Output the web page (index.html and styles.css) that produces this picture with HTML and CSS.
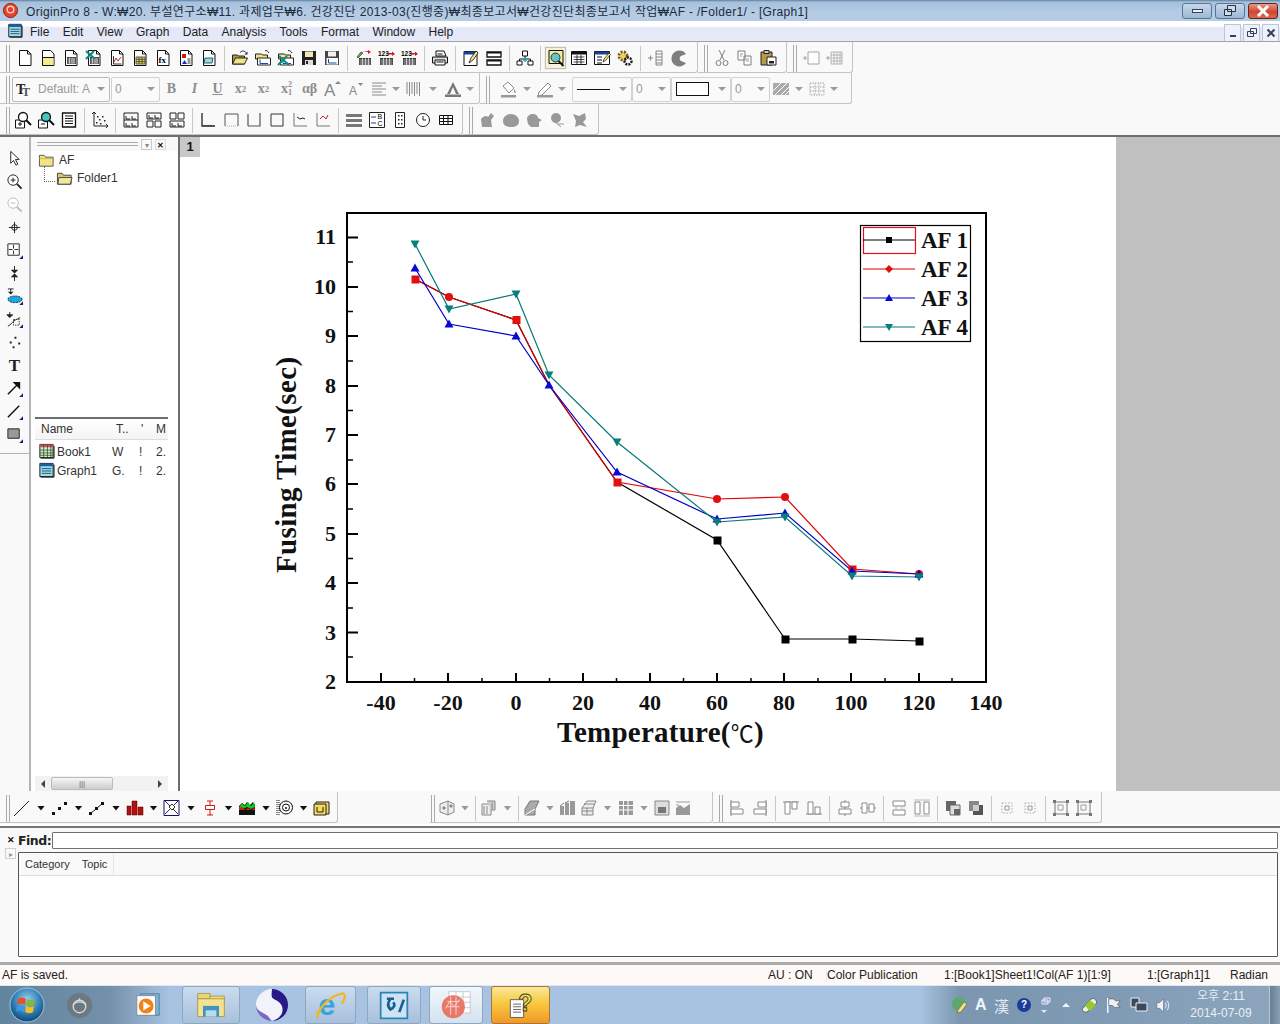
FILE: index.html
```html
<!DOCTYPE html>
<html lang="ko">
<head>
<meta charset="utf-8">
<title>OriginPro 8</title>
<link rel="stylesheet" href="styles.css">
</head>
<body>
<svg class="defs" width="0" height="0">
<defs>
<symbol id="doc" viewBox="0 0 18 18"><path d="M3.5 1.5h8l3.500 3.500v11.500h-11.500z" fill="#fff" stroke="#111"/><path d="M11.500 1.500v3.500h3.500" fill="none" stroke="#111"/></symbol>
<symbol id="proj" viewBox="0 0 18 18"><path d="M3.500 1.500h8l3.500 3.500v11.500h-11.500z" fill="#fff" stroke="#111"/><path d="M4 9h10.500v7h-10.500z" fill="#f6ea8c"/><path d="M3.500 8.500h11.500" stroke="#111"/></symbol>
<symbol id="wks" viewBox="0 0 18 18"><use href="#doc"/><path d="M5 8h9v7h-9z" fill="#333"/><path d="M5.500 10h8M5.500 12h8M5.500 14h8M7.500 8.500v6M10 8.500v6M12 8.500v6" stroke="#eee" stroke-width=".7"/></symbol>
<symbol id="xl" viewBox="0 0 18 18"><use href="#wks"/><path d="M1 2l9 8M9 2l-8 8" stroke="#0f8a80" stroke-width="2.200"/></symbol>
<symbol id="gr" viewBox="0 0 18 18"><use href="#doc"/><path d="M5.500 7v8h8" fill="none" stroke="#333"/><path d="M6 13l2-4 2 3 3-4" fill="none" stroke="#d02020"/></symbol>
<symbol id="mat" viewBox="0 0 18 18"><use href="#doc"/><path d="M5 8h9v7h-9z" fill="#e8d85c"/><path d="M5 8h9v7h-9zM5 10.300h9M5 12.600h9M8 8v7M11 8v7" fill="none" stroke="#333" stroke-width=".8"/></symbol>
<symbol id="fx" viewBox="0 0 18 18"><use href="#doc"/><text x="4.600" y="14" font-family="Liberation Serif" font-weight="700" font-size="9">fx</text></symbol>
<symbol id="lay" viewBox="0 0 18 18"><use href="#doc"/><path d="M5 5h4v4h-4z" fill="#d01818"/><path d="M5 15l2.500-4 2.500 4z" fill="#1030c0"/><path d="M10.500 10h3M10.500 12h3M10.500 14h3" stroke="#333"/></symbol>
<symbol id="note" viewBox="0 0 18 18"><use href="#doc"/><path d="M5 9h8l-1 5h-8z" fill="#9cd8d8" stroke="#155" stroke-width=".9"/></symbol>
<symbol id="open" viewBox="0 0 18 18"><path d="M1.500 6h5l1 1h6v8h-12z" fill="#ad9b3c" stroke="#222"/><path d="M1.500 15l3-6h12l-3 6z" fill="#f3e388" stroke="#222"/><path d="M9 3.500c2-2 4-2 6 0" fill="none" stroke="#222"/><path d="M16.500 2.500v3h-3z" fill="#222"/></symbol>
<symbol id="opent" viewBox="0 0 18 18"><path d="M1.500 5h6l1 1h5v4h-12z" fill="#f3e388" stroke="#222"/><path d="M3.500 9h13v7h-13z" fill="#fff" stroke="#222"/><path d="M6 10.500v4h8" fill="none" stroke="#124aa0"/><path d="M11 1.500c2 0 3 1 4 2.500" fill="none" stroke="#222"/></symbol>
<symbol id="openx" viewBox="0 0 18 18"><use href="#opent"/><path d="M2 7l10 9M10 7l-9 9" stroke="#0f8a80" stroke-width="2"/></symbol>
<symbol id="save" viewBox="0 0 18 18"><path d="M2 2h14v14h-14z" fill="#222"/><path d="M5 2.500h8v5.500h-8z" fill="#f1e8b0"/><path d="M5 11h8v5h-8z" fill="#ddd"/><path d="M6 12h2v3h-2z" fill="#222"/></symbol>
<symbol id="savet" viewBox="0 0 18 18"><path d="M2 2h14v14h-14z" fill="#444"/><path d="M5 2.500h8v5h-8z" fill="#f1f1f1"/><path d="M3.500 9h11.500v6.500h-11.500z" fill="#fff"/><path d="M5.500 10v4h8" fill="none" stroke="#124aa0"/></symbol>
<symbol id="imp1" viewBox="0 0 18 18"><path d="M5 9h12v7h-12z" fill="#333"/><path d="M5.500 11h11M5.500 13h11M5.500 15h11M8.500 9v7M11.500 9v7M14.500 9v7" stroke="#eee" stroke-width=".7"/><path d="M3 8l4-5 2 1-5 5z" fill="#6ca848" stroke="#222" stroke-width=".6"/><path d="M9 3h5v2l3-2-3-2v1" fill="#d01818"/></symbol>
<symbol id="imp2" viewBox="0 0 18 18"><path d="M3 9h13v7h-13z" fill="#333"/><path d="M3.500 11h12M3.500 13h12M3.500 15h12M6.500 9v7M9.500 9v7M12.500 9v7" stroke="#eee" stroke-width=".7"/><text x="1" y="7" font-family="Liberation Sans" font-weight="700" font-size="6.500">123</text><path d="M11 4h4v-1.500l3 2.500-3 2v-1.500h-4z" fill="#d01818"/></symbol>
<symbol id="print" viewBox="0 0 18 18"><path d="M5 2h8l2 5h-10z" fill="#fff" stroke="#111"/><path d="M1.500 8h15v6h-15z" fill="#ddd" stroke="#111"/><path d="M4 11h10v5h-10z" fill="#fff" stroke="#111"/><path d="M6.500 5h5M5.500 13h7" stroke="#111"/></symbol>
<symbol id="pen" viewBox="0 0 18 18"><path d="M2 2.500h13v14h-13z" fill="#fff" stroke="#111"/><path d="M2 2.500h13v3h-13z" fill="#1a3f94"/><path d="M7 14l2-5 5-7 2 2-5 7z" fill="#fbe880" stroke="#111" stroke-width=".8"/></symbol>
<symbol id="split" viewBox="0 0 18 18"><path d="M2 3h14v5h-14zM2 11h14v5h-14z" fill="#fff" stroke="#111" stroke-width="1.300"/><path d="M2 3h14v1.500h-14zM2 11h14v1.500h-14z" fill="#111"/></symbol>
<symbol id="tree" viewBox="0 0 18 18"><path d="M9 7v3M3.500 12v-2h11v2" fill="none" stroke="#111"/><path d="M6.500 2h5v5h-5zM1 12h5v4h-5zM12 12h5v4h-5z" fill="#fff" stroke="#111"/><path d="M9 8l3 2.500-3 2.500-3-2.500z" fill="#39a0a8"/></symbol>
<symbol id="find" viewBox="0 0 18 18"><path d="M2 1.500h14v13h-14z" fill="#f6ec9c" stroke="#111"/><circle cx="8.500" cy="8.500" r="4.500" fill="#5fc4cc" stroke="#333"/><path d="M11.500 12l5 5" stroke="#111" stroke-width="2"/></symbol>
<symbol id="tab" viewBox="0 0 18 18"><path d="M1.500 2.500h15v13h-15z" fill="#fff" stroke="#111"/><path d="M1.500 2.500h15v3h-15z" fill="#111"/><path d="M3.500 8h11M3.500 10.500h11M3.500 13h11M7 6v9M11 6v9" stroke="#111" stroke-width=".8"/></symbol>
<symbol id="tabp" viewBox="0 0 18 18"><path d="M1.500 2.500h15v13h-15z" fill="#fff" stroke="#111"/><path d="M1.500 2.500h15v3h-15z" fill="#1a3f94"/><path d="M4 8h5M4 11h5M4 14h5" stroke="#111"/><path d="M10 13l1-3 5-6 1.500 1.500-5 6z" fill="#fbe880" stroke="#111" stroke-width=".7"/></symbol>
<symbol id="gear" viewBox="0 0 18 18"><circle cx="7" cy="7" r="4" fill="none" stroke="#7a5c10" stroke-width="3" stroke-dasharray="2 1.200"/><circle cx="12" cy="12" r="3.500" fill="none" stroke="#222" stroke-width="2.500" stroke-dasharray="2 1"/><circle cx="7" cy="7" r="2.500" fill="#f0cf50"/></symbol>
<symbol id="addc" viewBox="0 0 18 18"><path d="M9 2h6v14h-6zM9 5h6M9 8h6M9 11h6M9 14h6M1 9h5M3.500 6.500v5" fill="none" stroke="#555" stroke-width=".9"/></symbol>
<symbol id="pie" viewBox="0 0 18 18"><path d="M16 5a8 8 0 1 0 0 9l-5-2a3 3 0 0 1 0-5z" fill="#555"/></symbol>
<symbol id="cut" viewBox="0 0 18 18"><path d="M6 1l5 10M12 1l-5 10" stroke="#555"/><circle cx="5.500" cy="14" r="2.500" fill="none" stroke="#555"/><circle cx="12.500" cy="14" r="2.500" fill="none" stroke="#555"/></symbol>
<symbol id="copy" viewBox="0 0 18 18"><path d="M2 2h7v9h-7zM8 7h7v9h-7z" fill="#fff" stroke="#555"/><path d="M4 5h3M4 7h2M10 10h3M10 12h3" stroke="#555" stroke-width=".8"/></symbol>
<symbol id="paste" viewBox="0 0 18 18"><path d="M2 3h11v13h-11z" fill="#b29a4a" stroke="#222"/><path d="M5 1.500h5v3h-5z" fill="#ccc" stroke="#222"/><path d="M8 8h9v8h-9z" fill="#fff" stroke="#222"/><path d="M10 12h5v2.500h-5z" fill="#222"/></symbol>
<symbol id="addr" viewBox="0 0 18 18"><path d="M6 3h11v12h-11z" fill="#fff" stroke="#888"/><path d="M1 9h4M3 7v4" stroke="#888"/></symbol>
<symbol id="addg" viewBox="0 0 18 18"><path d="M6 3h11v12h-11zM6 6h11M6 9h11M6 12h11M9 3v12M12 3v12M15 3v12" fill="#fff" stroke="#888" stroke-width=".8"/><path d="M1 9h4M3 7v4" stroke="#888"/></symbol>
<symbol id="fonts" viewBox="0 0 18 18"><text x="0" y="14" font-family="Liberation Serif" font-weight="700" font-size="14" fill="#222">T</text><text x="6" y="16" font-family="Liberation Serif" font-weight="700" font-size="12" fill="#555">T</text></symbol>
<symbol id="ainc" viewBox="0 0 18 18"><text x="0" y="16" font-family="Liberation Sans" font-size="17" fill="#888">A</text><path d="M14 1l3 3h-6z" fill="#888"/></symbol>
<symbol id="adec" viewBox="0 0 18 18"><text x="2" y="15" font-family="Liberation Sans" font-size="12" fill="#888">A</text><path d="M11 3h5l-2.500 3z" fill="#888"/></symbol>
<symbol id="align" viewBox="0 0 18 18"><path d="M2 3h14M2 6h10M2 9h14M2 12h10M2 15h14" stroke="#888"/></symbol>
<symbol id="bars" viewBox="0 0 18 18"><path d="M2 2v12M4.500 2v14M7 2v12M9.500 2v14M12 2v12M14.500 2v14" stroke="#888"/></symbol>
<symbol id="acol" viewBox="0 0 18 18"><path d="M3 14l6-12 6 12h-3l-3-7-3 7z" fill="#777"/><path d="M1 14.500h16v2.500h-16z" fill="#777"/></symbol>
<symbol id="fill" viewBox="0 0 18 18"><path d="M3 6l5-4 6 6-5 5z" fill="#fff" stroke="#888"/><path d="M14 9c2 2 2 4 1 4s-1-2-1-4z" fill="#888"/><path d="M1 15h15v2.500h-15z" fill="#999"/></symbol>
<symbol id="lpen" viewBox="0 0 18 18"><path d="M3 12l9-9 3 3-9 9-4 1z" fill="#fff" stroke="#888"/><path d="M1 15h16v2.500h-16z" fill="#999"/></symbol>
<symbol id="patt" viewBox="0 0 18 18"><path d="M1 3h16v12h-16z" fill="#aaa"/><path d="M1 11l8-8M3 15l12-12M9 15l8-8M13 15l4-4" stroke="#fff"/></symbol>
<symbol id="gridb" viewBox="0 0 18 18"><path d="M2 3h14v12h-14zM2 7h14M2 11h14M7 3v12M11 3v12" fill="none" stroke="#aaa" stroke-dasharray="1.500 1"/></symbol>
<symbol id="zin" viewBox="0 0 18 18"><path d="M1.500 9h9v8h-9zM4 13h4M6 11v4" fill="#fff" stroke="#111"/><circle cx="9" cy="6" r="4.500" fill="#fff" stroke="#111" stroke-width="1.300"/><path d="M12 9l5 5" stroke="#111" stroke-width="2"/></symbol>
<symbol id="zout" viewBox="0 0 18 18"><path d="M1.500 9h9v8h-9zM4 13h4" fill="#fff" stroke="#111"/><circle cx="9" cy="6" r="4.500" fill="#41c6c6" stroke="#111" stroke-width="1.300"/><path d="M12 9l5 5" stroke="#111" stroke-width="2"/></symbol>
<symbol id="lst" viewBox="0 0 18 18"><path d="M2.500 2h13v14h-13z" fill="#fff" stroke="#111" stroke-width="1.300"/><path d="M5 5h8M5 7.500h8M5 10h8M5 12.500h8" stroke="#111"/></symbol>
<symbol id="scat" viewBox="0 0 18 18"><path d="M3 1v14h14M1 3l2-2 2 2M15 13l2 2-2 2" fill="none" stroke="#222"/><path d="M5 11h1.500v1.500h-1.500zM8 8h1.500v1.500h-1.500zM11 5h1.500v1.500h-1.500zM13 9h1.500v1.500h-1.500zM9 12h1.500v1.500h-1.500zM6 5h1.500v1.500h-1.500z" fill="#222"/></symbol>
<symbol id="l1" viewBox="0 0 18 18"><path d="M2 2h14v14h-14zM2 9h14M4 5v3M4 8h4M10 5v3M10 8h4M4 12v3M4 15h4M10 12v3M10 15h4" fill="none" stroke="#222"/></symbol>
<symbol id="l2" viewBox="0 0 18 18"><path d="M2 2h14v6h-14zM2 10h6v6h-6zM10 10h6v6h-6zM4 4v3h4M10 4v3h4" fill="none" stroke="#222"/></symbol>
<symbol id="l3" viewBox="0 0 18 18"><path d="M2 2h6v6h-6zM10 2h6v6h-6zM2 10h14v6h-14zM4 12v3h4M10 12v3h4" fill="none" stroke="#222"/></symbol>
<symbol id="ax1" viewBox="0 0 18 18"><path d="M3 2v13h13" fill="none" stroke="#222" stroke-width="1.300"/><path d="M6 14v1M9 14v1M12 14v1" stroke="#222"/></symbol>
<symbol id="ax2" viewBox="0 0 18 18"><path d="M3 15v-12h13v12" fill="none" stroke="#555"/><path d="M3 15h13" stroke="#aaa" stroke-dasharray="1 1"/></symbol>
<symbol id="ax3" viewBox="0 0 18 18"><path d="M3 15v-12M15 2v13h-12" fill="none" stroke="#555" stroke-width="1.200"/></symbol>
<symbol id="ax4" viewBox="0 0 18 18"><path d="M3 3h12v12h-12z" fill="none" stroke="#333"/></symbol>
<symbol id="ax5" viewBox="0 0 18 18"><path d="M3 2v13h13" fill="none" stroke="#777"/><path d="M6 6l3 2 3-1 2 1" fill="none" stroke="#222"/></symbol>
<symbol id="ax6" viewBox="0 0 18 18"><path d="M3 2v13h13" fill="none" stroke="#777"/><path d="M6 8l3-3 3 3 2-4" fill="none" stroke="#c02020"/></symbol>
<symbol id="rows" viewBox="0 0 18 18"><path d="M1 3h16v3h-16zM1 8h16v3h-16zM1 13h16v3h-16z" fill="#777"/></symbol>
<symbol id="abc" viewBox="0 0 18 18"><path d="M1.500 1.500h15v15h-15z" fill="#fff" stroke="#222"/><path d="M3 6h5M3 12h5" stroke="#1a3f94"/><text x="9.500" y="8" font-family="Liberation Sans" font-size="7">B</text><text x="9.500" y="15" font-family="Liberation Sans" font-size="7">C</text></symbol>
<symbol id="dots" viewBox="0 0 18 18"><path d="M4.500 1.500h9v15h-9z" fill="#fff" stroke="#222"/><path d="M7 4h1.500v1.500h-1.500zM10 8h1.500v1.500h-1.500zM7 8h1.500v1.500h-1.500zM10 12h1.500v1.500h-1.500zM7 12h1.500v1.500h-1.500zM10 4h1.500v1.500h-1.500z" fill="#222"/></symbol>
<symbol id="clock" viewBox="0 0 18 18"><circle cx="9" cy="9" r="6.500" fill="#fff" stroke="#222"/><path d="M9 5v4h3" fill="none" stroke="#222"/></symbol>
<symbol id="tbl" viewBox="0 0 18 18"><path d="M2.500 4.500h13v9h-13zM2.500 7.500h13M2.500 10.500h13M6.500 4.500v9M11 4.500v9" fill="#fff" stroke="#111"/></symbol>
<symbol id="g1" viewBox="0 0 18 18"><path d="M2 8c2-3 6-4 7-2l3-4 3 3-3 4 1 7h-10z" fill="#999"/></symbol>
<symbol id="g2" viewBox="0 0 18 18"><path d="M1 10c0-5 5-7 8-7 4 0 8 3 8 7s-3 6-8 6-8-2-8-6z" fill="#999"/></symbol>
<symbol id="g3" viewBox="0 0 18 18"><path d="M2 8c0-3 3-5 6-5s5 2 5 4l4 2-3 2v5h-8l-3-3z" fill="#999"/></symbol>
<symbol id="g4" viewBox="0 0 18 18"><path d="M3 7a5 5 0 0 1 10 0c0 3-3 5-5 5s-5-2-5-5z" fill="#999"/><path d="M8 12l5 4M10 13h6" stroke="#999"/></symbol>
<symbol id="g5" viewBox="0 0 18 18"><path d="M2 3l6 2 6-3 1 6-3 3 4 5-7-2-5 2 1-6z" fill="#999"/></symbol>
<symbol id="t-sel" viewBox="0 0 18 18"><path d="M5 1.500v12.500l3-3 2.500 5 2-1-2.500-5h4z" fill="#fff" stroke="#222"/></symbol>
<symbol id="t-zi" viewBox="0 0 18 18"><circle cx="7.500" cy="7.500" r="5.500" fill="#fff" stroke="#222"/><path d="M5 7.500h5M7.500 5v5" stroke="#222"/><path d="M11.500 11.500l5 5" stroke="#222" stroke-width="2"/></symbol>
<symbol id="t-zo" viewBox="0 0 18 18"><circle cx="7.500" cy="7.500" r="5.500" fill="#fff" stroke="#bbb"/><path d="M5 7.500h5" stroke="#bbb"/><path d="M11.500 11.500l5 5" stroke="#bbb" stroke-width="2"/></symbol>
<symbol id="t-cr" viewBox="0 0 18 18"><circle cx="9" cy="9" r="3" fill="none" stroke="#222"/><path d="M9 3v12M3 9h12" stroke="#222"/></symbol>
<symbol id="t-rs" viewBox="0 0 18 18"><path d="M2 2h12v12h-12z" fill="#fff" stroke="#222"/><path d="M8 3v4M8 9v4M3 8h4M9 8h4" stroke="#222"/><path d="M18 14v4h-4z" fill="#1c1c80"/></symbol>
<symbol id="t-pk" viewBox="0 0 18 18"><path d="M9 1v6M9 11v6" stroke="#222"/><path d="M5 5h8l-4 4zM9 9l4 4h-8z" fill="#222"/></symbol>
<symbol id="t-ds" viewBox="0 0 18 18"><ellipse cx="9.500" cy="12" rx="7.500" ry="3.500" fill="#18a8e8" stroke="#222" stroke-dasharray="2 1"/><path d="M2 1h6M5 1v3" stroke="#222"/><path d="M2 4h6l-3 3z" fill="#222"/><path d="M18 14v4h-4z" fill="#1c1c80"/></symbol>
<symbol id="t-dr" viewBox="0 0 18 18"><path d="M4 1v3M1 4h6l-3 3zM2 16c3-1 5-6 13-9" fill="none" stroke="#222"/><path d="M1 4h6l-3 3z" fill="#222"/><path d="M8 9h6v6h-6z" fill="none" stroke="#333" stroke-dasharray="1.500 1"/><path d="M18 14v4h-4z" fill="#1c1c80"/></symbol>
<symbol id="t-dt" viewBox="0 0 18 18"><path d="M9 3h2v2h-2zM4 8h2v2h-2zM13 9h2v2h-2zM7 13h2v2h-2z" fill="#222"/></symbol>
<symbol id="t-ar" viewBox="0 0 18 18"><path d="M2 15l11-11" stroke="#111" stroke-width="1.500"/><path d="M7 2h8v8z" fill="#111"/><path d="M18 14v4h-4z" fill="#1c1c80"/></symbol>
<symbol id="t-ln" viewBox="0 0 18 18"><path d="M2 15l12-12" stroke="#111" stroke-width="1.500"/><path d="M18 14v4h-4z" fill="#1c1c80"/></symbol>
<symbol id="t-rc" viewBox="0 0 18 18"><path d="M2 3h12v10h-12z" fill="#999" stroke="#222"/><path d="M18 14v4h-4z" fill="#1c1c80"/></symbol>
<symbol id="b-ln" viewBox="0 0 18 18"><path d="M1 17l15-15" stroke="#222"/></symbol>
<symbol id="b-sc" viewBox="0 0 18 18"><path d="M1 13h3v3h-3zM7 8h3v3h-3zM13 3h3v3h-3z" fill="#111"/></symbol>
<symbol id="b-ls" viewBox="0 0 18 18"><path d="M2 15l13-11" stroke="#111"/><path d="M1 13h3v3h-3zM7 8h3v3h-3zM13 3h3v3h-3z" fill="#111"/></symbol>
<symbol id="b-bar" viewBox="0 0 18 18"><path d="M1 7h4v9h-4zM6 2h5v14h-5zM12 8h5v8h-5z" fill="#b81010" stroke="#400" stroke-width=".5"/></symbol>
<symbol id="b-3d" viewBox="0 0 18 18"><path d="M1 1.500h15v15h-15z" fill="#fff" stroke="#101070"/><path d="M2 2l13 13M15 2l-13 13" stroke="#333"/><path d="M6 8l3-3 3 3-3 3z" fill="#fff" stroke="#333"/></symbol>
<symbol id="b-err" viewBox="0 0 18 18"><path d="M6 2h6M9 2v14M6 16h6" stroke="#d01818"/><path d="M4.500 6.500h9v4h-9z" fill="#fff" stroke="#d01818"/></symbol>
<symbol id="b-sf" viewBox="0 0 18 18"><path d="M1 7l3-3 3 2 2-3 3 3 3-3 2 3v10h-16z" fill="#111"/><path d="M1 9l3-5 3 3 3-4 3 4 3-4 1 5-4 2-4-2-4 2z" fill="#13c422"/><path d="M1 9l3-1 3 3 3-2 3 2 3-2 1 1v1h-16z" fill="#d81818"/></symbol>
<symbol id="b-sp" viewBox="0 0 18 18"><path d="M1 1v15M3 1v15" stroke="#111" stroke-dasharray="1 1"/><circle cx="10" cy="8.500" r="6.500" fill="none" stroke="#111"/><circle cx="10" cy="8.500" r="3.500" fill="none" stroke="#111"/><circle cx="10" cy="9" r="1" fill="#111"/></symbol>
<symbol id="b-tm" viewBox="0 0 18 18"><path d="M3 3h13v12h-13z" fill="#f4d860" stroke="#222"/><path d="M1 5h12v11h-12z" fill="#f4d860" stroke="#222"/><path d="M4 8v5h6v-5" fill="none" stroke="#222"/></symbol>
<symbol id="m1" viewBox="0 0 18 18"><path d="M2 5l8-3 6 3v8l-6 3-8-3z" fill="#eee" stroke="#888"/><path d="M10 2v14M5 8h2v2h-2zM12 6h2v2h-2z" stroke="#888" fill="#888"/></symbol>
<symbol id="m2" viewBox="0 0 18 18"><path d="M2 5h9v11h-9z" fill="#eee" stroke="#888"/><path d="M7 2h8v9h-4" fill="#ccc" stroke="#888"/><path d="M4 7v8M7 7v8M12 4v6" stroke="#888"/></symbol>
<symbol id="m3" viewBox="0 0 18 18"><path d="M2 10l5-8h9l-4 8v6h-10z" fill="#aaa" stroke="#777"/><path d="M2 16l10-6" stroke="#fff"/></symbol>
<symbol id="m4" viewBox="0 0 18 18"><path d="M1 7h4v9h-4zM6 4h4v12h-4zM11 2h5v14h-5z" fill="#999"/><path d="M1 7l4-3M6 4l4-2" stroke="#777"/></symbol>
<symbol id="m5" viewBox="0 0 18 18"><path d="M2 9l5-7h9l-3 7v7h-11z" fill="#eee" stroke="#888"/><path d="M2 9h11M2 12h11M7 9v7M4 5h10" stroke="#888"/></symbol>
<symbol id="m6" viewBox="0 0 18 18"><path d="M2 2h14v14h-14z" fill="#999"/><path d="M2 6.500h14M2 11h14M6.500 2v14M11 2v14" stroke="#fff"/></symbol>
<symbol id="m7" viewBox="0 0 18 18"><path d="M2 2h14v14h-14z" fill="#ddd" stroke="#888"/><path d="M5 8h8v6h-8z" fill="#777"/></symbol>
<symbol id="m8" viewBox="0 0 18 18"><path d="M2 9l4-3 4 3 6-4v11h-14z" fill="#999"/><path d="M2 3h14M2 6h3" stroke="#999"/></symbol>
<symbol id="a1" viewBox="0 0 18 18"><path d="M3 1v16" stroke="#888"/><path d="M3 3h8v5h-8zM3 10h12v5h-12z" fill="#fff" stroke="#888"/></symbol>
<symbol id="a2" viewBox="0 0 18 18"><path d="M15 1v16" stroke="#888"/><path d="M7 3h8v5h-8zM3 10h12v5h-12z" fill="#fff" stroke="#888"/></symbol>
<symbol id="a3" viewBox="0 0 18 18"><path d="M1 3h16" stroke="#888"/><path d="M3 3h5v12h-5zM10 3h5v7h-5z" fill="#fff" stroke="#888"/></symbol>
<symbol id="a4" viewBox="0 0 18 18"><path d="M1 15h16" stroke="#888"/><path d="M3 3h5v12h-5zM10 8h5v7h-5z" fill="#fff" stroke="#888"/></symbol>
<symbol id="a5" viewBox="0 0 18 18"><path d="M9 1v16" stroke="#888"/><path d="M5 3h8v5h-8zM3 10h12v5h-12z" fill="#fff" stroke="#888"/></symbol>
<symbol id="a6" viewBox="0 0 18 18"><path d="M1 9h16" stroke="#888"/><path d="M3 4h5v10h-5zM10 5h5v8h-5z" fill="#fff" stroke="#888"/></symbol>
<symbol id="a7" viewBox="0 0 18 18"><path d="M3 2h12v5h-12zM3 11h12v5h-12z" fill="#fff" stroke="#888"/><path d="M6 7v4M12 7v4" stroke="#bbb"/></symbol>
<symbol id="a8" viewBox="0 0 18 18"><path d="M2 3h5v12h-5zM11 3h5v12h-5z" fill="#fff" stroke="#888"/><path d="M1 1h16M1 17h16" stroke="#bbb"/></symbol>
<symbol id="f1" viewBox="0 0 18 18"><path d="M2 2h10v10h-10z" fill="#666"/><path d="M6 6h10v10h-10z" fill="#ddd" stroke="#666"/><path d="M10 10h6v6h-6z" fill="#666"/></symbol>
<symbol id="f2" viewBox="0 0 18 18"><path d="M2 2h10v10h-10z" fill="#888"/><path d="M6 6h10v10h-10z" fill="#555"/><path d="M6 6h6v6h-6z" fill="#ccc"/></symbol>
<symbol id="u1" viewBox="0 0 18 18"><path d="M4 4h10v10h-10z" fill="none" stroke="#aaa" stroke-dasharray="1.500 1.500"/><path d="M7 7h4v4h-4z" fill="none" stroke="#999"/></symbol>
<symbol id="r1" viewBox="0 0 18 18"><path d="M3 3h12v12h-12z" fill="none" stroke="#777"/><path d="M1 1h3v3h-3zM14 1h3v3h-3zM1 14h3v3h-3zM14 14h3v3h-3z" fill="#777"/><path d="M6 6h5v5h-5z" fill="none" stroke="#999"/></symbol>
<symbol id="fold" viewBox="0 0 18 18"><path d="M1.500 3.500h5l1.500 2h8v9.500h-14.500z" fill="#f2e384" stroke="#555"/><path d="M1.500 7h14.500" stroke="#c9b84c"/></symbol>
<symbol id="fold2" viewBox="0 0 18 18"><path d="M1.500 3.500h5l1.500 2h8v9.500h-14.500z" fill="#d8c76a" stroke="#444"/><path d="M3 8h14l-2 7h-13z" fill="#f4e79c" stroke="#444"/></symbol>
<symbol id="book" viewBox="0 0 18 18"><path d="M2 1.500h14v14h-14z" fill="#d9f0d0" stroke="#111"/><path d="M2 1.500h14v3h-14z" fill="#d24a6a"/><path d="M2 7.500h14M2 10.500h14M2 13h14M6 2v13M10 2v13M13.500 2v13" stroke="#245024" stroke-width=".8"/><path d="M17 3v13h-14" fill="none" stroke="#111"/></symbol>
<symbol id="grph" viewBox="0 0 18 18"><path d="M2 1.500h14v14h-14z" fill="#9ce0e0" stroke="#111"/><path d="M2 1.500h14v3h-14z" fill="#1a60a0"/><path d="M4 7h10M4 9.500h10M4 12h10" stroke="#1c4a8c"/><path d="M17 3v13h-14" fill="none" stroke="#111"/></symbol>
</defs>
</svg>

<div class="app">
  <header class="title">
    <svg class="appicon" viewBox="0 0 18 18"><circle cx="9" cy="9" r="7.500" fill="#e2442e" stroke="#8a2018"/><circle cx="9" cy="8" r="3.500" fill="none" stroke="#f9d0c0" stroke-width="1.500"/></svg>
    <span class="titletext">OriginPro 8 - W:₩20. 부설연구소₩11. 과제업무₩6. 건강진단 2013-03(진행중)₩최종보고서₩건강진단최종보고서 작업₩AF - /Folder1/ - [Graph1]</span>
    <div class="caps">
      <span class="cap"><i class="capmin"></i></span>
      <span class="cap"><svg width="14" height="13" viewBox="0 0 14 13"><path d="M4.500 1.500h8v6h-8zM1.500 5.500h7v6h-7z" fill="#cfdcec" stroke="#234"/></svg></span>
      <span class="cap capx"><svg width="14" height="12" viewBox="0 0 14 12"><path d="M2 1l10 10M12 1l-10 10" stroke="#fff" stroke-width="3"/></svg></span>
    </div>
  </header>

  <nav class="menu">
    <svg class="docicon" viewBox="0 0 18 18"><use href="#grph"/></svg>
    <span>File</span><span>Edit</span><span>View</span><span>Graph</span><span>Data</span><span>Analysis</span><span>Tools</span><span>Format</span><span>Window</span><span>Help</span>
    <div class="mdicaps">
      <span class="mcap"><svg width="10" height="10" viewBox="0 0 10 10"><path d="M2 8h6" stroke="#345" stroke-width="2"/></svg></span>
      <span class="mcap"><svg width="10" height="10" viewBox="0 0 10 10"><path d="M3.500 .5h6v5h-6zM.5 3.500h6v5h-6z" fill="#eef" stroke="#345"/></svg></span>
      <span class="mcap"><svg width="10" height="10" viewBox="0 0 10 10"><path d="M1.500 1.500l7 7M8.500 1.500l-7 7" stroke="#345" stroke-width="2"/></svg></span>
    </div>
  </nav>

  <section class="toolbars">
    <div class="row">
      <div class="tb"><i class="grip g13"></i>
        <b class="i"><svg><use href="#doc"/></svg></b><b class="i"><svg><use href="#proj"/></svg></b><b class="i"><svg><use href="#wks"/></svg></b><b class="i"><svg><use href="#xl"/></svg></b><b class="i"><svg><use href="#gr"/></svg></b><b class="i"><svg><use href="#mat"/></svg></b><b class="i"><svg><use href="#fx"/></svg></b><b class="i"><svg><use href="#lay"/></svg></b><b class="i"><svg><use href="#note"/></svg></b>
        <i class="sep"></i>
        <b class="i"><svg><use href="#open"/></svg></b><b class="i"><svg><use href="#opent"/></svg></b><b class="i"><svg><use href="#openx"/></svg></b><b class="i"><svg><use href="#save"/></svg></b><b class="i"><svg><use href="#savet"/></svg></b>
        <i class="sep"></i>
        <b class="i"><svg><use href="#imp1"/></svg></b><b class="i"><svg><use href="#imp2"/></svg></b><b class="i"><svg><use href="#imp2"/></svg></b>
        <i class="sep"></i>
        <b class="i"><svg><use href="#print"/></svg></b>
        <i class="sep"></i>
        <b class="i"><svg><use href="#pen"/></svg></b><b class="i"><svg><use href="#split"/></svg></b>
        <i class="sep"></i>
        <b class="i"><svg><use href="#tree"/></svg></b>
        <i class="sep"></i>
        <b class="i on"><svg><use href="#find"/></svg></b><b class="i"><svg><use href="#tab"/></svg></b><b class="i"><svg><use href="#tabp"/></svg></b><b class="i"><svg><use href="#gear"/></svg></b>
        <i class="sep"></i>
        <b class="i off"><svg><use href="#addc"/></svg></b><b class="i off"><svg><use href="#pie"/></svg></b>
      </div>
      <div class="tb"><i class="grip g12"></i>
        <b class="i off"><svg><use href="#cut"/></svg></b><b class="i off"><svg><use href="#copy"/></svg></b><b class="i"><svg><use href="#paste"/></svg></b>
      </div>
      <div class="tb"><i class="grip g12"></i>
        <b class="i off"><svg><use href="#addr"/></svg></b><b class="i off"><svg><use href="#addg"/></svg></b>
      </div>
    </div>

    <div class="row">
      <div class="tb tbf"><i class="grip g12"></i>
        <span class="combo fontc"><svg class="ic" viewBox="0 0 18 18"><use href="#fonts"/></svg><span class="ctext">Default: A</span><em class="arr"></em></span>
        <span class="combo sizec"><span class="ctext">0</span><em class="arr"></em></span>
        <b class="i t tb1">B</b><b class="i t it">I</b><b class="i t ul">U</b><b class="i t">x<sup>2</sup></b><b class="i t">x<sub>2</sub></b><b class="i t">x<span class="stack">2<br>1</span></b><b class="i t">αβ</b>
        <b class="i"><svg><use href="#ainc"/></svg></b><b class="i"><svg><use href="#adec"/></svg></b>
        <b class="i"><svg><use href="#align"/></svg></b><em class="arrs"></em>
        <b class="i"><svg><use href="#bars"/></svg></b><em class="arrs a15"></em>
        <b class="i"><svg><use href="#acol"/></svg></b><em class="arrs"></em>
      </div>
      <div class="tb tbp"><i class="grip g17"></i>
        <b class="i"><svg><use href="#fill"/></svg></b><em class="arrs a14"></em>
        <b class="i w22"><svg><use href="#lpen"/></svg></b><em class="arrs"></em>
        <span class="combo linec"><i class="lsample"></i><em class="arr"></em></span>
        <span class="combo numc"><span class="ctext">0</span><em class="arr"></em></span>
        <span class="combo rectc"><i class="rsample"></i><em class="arr"></em></span>
        <span class="combo numc"><span class="ctext">0</span><em class="arr"></em></span>
        <b class="i w22"><svg><use href="#patt"/></svg></b><em class="arrs a14"></em>
        <b class="i w22"><svg><use href="#gridb"/></svg></b><em class="arrs"></em>
      </div>
    </div>

    <div class="row">
      <div class="tb tbr"><i class="grip g11"></i>
        <b class="i"><svg><use href="#zin"/></svg></b><b class="i"><svg><use href="#zout"/></svg></b><b class="i"><svg><use href="#lst"/></svg></b>
        <i class="sep"></i>
        <b class="i"><svg><use href="#scat"/></svg></b>
        <i class="sep"></i>
        <b class="i"><svg><use href="#l1"/></svg></b><b class="i"><svg><use href="#l2"/></svg></b><b class="i"><svg><use href="#l3"/></svg></b>
        <i class="sep"></i>
        <b class="i"><svg><use href="#ax1"/></svg></b><b class="i"><svg><use href="#ax2"/></svg></b><b class="i"><svg><use href="#ax3"/></svg></b><b class="i"><svg><use href="#ax4"/></svg></b><b class="i"><svg><use href="#ax5"/></svg></b><b class="i"><svg><use href="#ax6"/></svg></b>
        <i class="sep"></i>
        <b class="i"><svg><use href="#rows"/></svg></b><b class="i"><svg><use href="#abc"/></svg></b><b class="i"><svg><use href="#dots"/></svg></b><b class="i"><svg><use href="#clock"/></svg></b><b class="i"><svg><use href="#tbl"/></svg></b>
      </div>
      <div class="tb"><i class="grip g13"></i>
        <b class="i"><svg><use href="#g1"/></svg></b><b class="i"><svg><use href="#g2"/></svg></b><b class="i"><svg><use href="#g3"/></svg></b><b class="i"><svg><use href="#g4"/></svg></b><b class="i"><svg><use href="#g5"/></svg></b>
      </div>
    </div>
  </section>

  <main class="main">
    <aside class="tools">
      <div class="toolcol">
        <b class="v"><svg><use href="#t-sel"/></svg></b><b class="v"><svg><use href="#t-zi"/></svg></b><b class="v"><svg><use href="#t-zo"/></svg></b><b class="v"><svg><use href="#t-cr"/></svg></b><b class="v"><svg><use href="#t-rs"/></svg></b><b class="v"><svg><use href="#t-pk"/></svg></b><b class="v"><svg><use href="#t-ds"/></svg></b><b class="v"><svg><use href="#t-dr"/></svg></b><b class="v"><svg><use href="#t-dt"/></svg></b><b class="v vt">T</b><b class="v"><svg><use href="#t-ar"/></svg></b><b class="v"><svg><use href="#t-ln"/></svg></b><b class="v"><svg><use href="#t-rc"/></svg></b>
      </div>
    </aside>

    <section class="panel">
      <div class="phead"><i class="pgrip"></i><span class="pbtn">▾</span><span class="pbtn px">✕</span></div>
      <div class="tree">
        <div class="node"><svg class="ficon" viewBox="0 0 18 18"><use href="#fold"/></svg><span>AF</span></div>
        <div class="node sub"><i class="conn"></i><svg class="ficon" viewBox="0 0 18 18"><use href="#fold2"/></svg><span>Folder1</span></div>
      </div>
      <div class="split"></div>
      <div class="lhead"><span class="c1">Name</span><span class="c2">T..</span><span class="c3">'</span><span class="c4">M</span></div>
      <div class="lrow"><svg class="ficon" viewBox="0 0 18 18"><use href="#book"/></svg><span class="c1b">Book1</span><span class="c2">W</span><span class="c3">!</span><span class="c4">2.</span></div>
      <div class="lrow"><svg class="ficon" viewBox="0 0 18 18"><use href="#grph"/></svg><span class="c1b">Graph1</span><span class="c2">G.</span><span class="c3">!</span><span class="c4">2.</span></div>
      <div class="hscroll"><em class="sl"></em><i class="thumb">|||</i><em class="sr"></em></div>
    </section>

    <section class="mdi">
      <span class="pageno">1</span>
      <svg class="chart" viewBox="180 137 936 654" width="936" height="654">
        <g class="frame">
          <rect x="347" y="213" width="639" height="469"/>
          <path d="M347 237.500h11M347 287h11M347 336h11M347 386h11M347 435h11M347 484h11M347 534h11M347 583h11M347 632.500h11"/>
          <path class="minor" d="M347 262h6M347 311.500h6M347 361h6M347 410.500h6M347 460h6M347 509h6M347 558.500h6M347 608h6M347 657h6"/>
          <path d="M381 682v-9M448 682v-9M516 682v-9M583 682v-9M650 682v-9M717 682v-9M784 682v-9M851 682v-9M919 682v-9"/>
          <path class="minor" d="M414.500 682v-4M482 682v-4M549.500 682v-4M616.500 682v-4M683.500 682v-4M751 682v-4M818 682v-4M885 682v-4M952 682v-4"/>
        </g>
        <g class="ticks">
          <text x="336" y="244">11</text><text x="336" y="294">10</text><text x="336" y="343">9</text><text x="336" y="393">8</text><text x="336" y="442">7</text><text x="336" y="491">6</text><text x="336" y="541">5</text><text x="336" y="590">4</text><text x="336" y="640">3</text><text x="336" y="689">2</text>
        </g>
        <g class="ticksx">
          <text x="381" y="710">-40</text><text x="448" y="710">-20</text><text x="516" y="710">0</text><text x="583" y="710">20</text><text x="650" y="710">40</text><text x="717" y="710">60</text><text x="784" y="710">80</text><text x="851" y="710">100</text><text x="919" y="710">120</text><text x="986" y="710">140</text>
        </g>
        <text class="axt axx" x="557" y="742">Temperature(<tspan class="cel">℃</tspan>)</text>
        <text class="axt axy" transform="translate(296 573) rotate(-90)">Fusing Time(sec)</text>

        <polyline class="s1" points="415,279 449,297 516,320 549,385 617,482 717,540 785,639 852,639 919,641"/>
        <polyline class="s2" points="415,279 449,297 516,320 549,385 617,482 717,499 785,497 852,569 919,574"/>
        <polyline class="s3" points="415,268 449,324 516,336 549,385 617,472 717,519 785,513 852,571 919,574"/>
        <polyline class="s4" points="415,244 449,309 516,294 549,375 617,442 717,522 785,517 852,576 919,577"/>

        <path class="mk1" d="M713.500 536.500h8v8h-8zM781.500 635.500h8v8h-8zM848.500 635.500h8v8h-8zM915.500 637.500h8v8h-8z"/>
        <g class="mk2">
          <path d="M411.500 275.500h8v8h-8zM512.500 316h8v8h-8zM613.500 478.500h8v8h-8zM848.500 565.500h8v8h-8z"/>
          <circle cx="449" cy="297" r="4"/><circle cx="717" cy="499" r="4"/><circle cx="785" cy="497" r="4"/><circle cx="919" cy="574" r="4"/>
        </g>
        <path class="mk3" d="M415 263.500l4.500 8h-9zM449 319.500l4.500 8h-9zM516 331.500l4.500 8h-9zM549 380.500l4.500 8h-9zM617 467.500l4.500 8h-9zM717 514.500l4.500 8h-9zM785 508.500l4.500 8h-9zM852 566.500l4.500 8h-9zM919 569.500l4.500 8h-9z"/>
        <path class="mk4" d="M415 248.500l4.500-8h-9zM449 313.500l4.500-8h-9zM516 298.500l4.500-8h-9zM549 379.500l4.500-8h-9zM617 446.500l4.500-8h-9zM717 526.500l4.500-8h-9zM785 521.500l4.500-8h-9zM852 580.500l4.500-8h-9zM919 581.500l4.500-8h-9z"/>

        <rect class="lbox" x="860.500" y="225.500" width="110" height="116"/>
        <rect class="lsel" x="863.500" y="227.500" width="52" height="26"/>
        <path class="lk" d="M863 240h52"/><path class="lr" d="M863 269h52"/><path class="lb" d="M863 298h52"/><path class="lt" d="M863 327h52"/>
        <path class="mk1" d="M886 237h6v6h-6z"/>
        <path class="mk2" d="M889 265l4 4-4 4-4-4z"/>
        <path class="mk3" d="M889 294l4 7h-8z"/>
        <path class="mk4" d="M889 331l4-7h-8z"/>
        <g class="ltext"><text x="921" y="248">AF 1</text><text x="921" y="277">AF 2</text><text x="921" y="306">AF 3</text><text x="921" y="335">AF 4</text></g>
      </svg>
    </section>
    <div class="mdigray"></div>
  </main>

  <section class="bottombar">
    <div class="tb bt1"><i class="grip g11"></i>
      <b class="n"><svg><use href="#b-ln"/></svg></b><em class="da"></em><b class="n"><svg><use href="#b-sc"/></svg></b><em class="da"></em><b class="n"><svg><use href="#b-ls"/></svg></b><em class="da"></em><b class="n"><svg><use href="#b-bar"/></svg></b><em class="da"></em><b class="n"><svg><use href="#b-3d"/></svg></b><em class="da"></em><b class="n"><svg><use href="#b-err"/></svg></b><em class="da"></em><b class="n"><svg><use href="#b-sf"/></svg></b><em class="da"></em><b class="n"><svg><use href="#b-sp"/></svg></b><em class="da"></em><b class="n"><svg><use href="#b-tm"/></svg></b>
    </div>
    <div class="tb bt2"><i class="grip g6"></i>
      <b class="n"><svg><use href="#m1"/></svg></b><em class="da g"></em><i class="sep s4"></i>
      <b class="n"><svg><use href="#m2"/></svg></b><em class="da g"></em><i class="sep s4"></i>
      <b class="n"><svg><use href="#m3"/></svg></b><em class="da g"></em>
      <b class="n"><svg><use href="#m4"/></svg></b>
      <b class="n"><svg><use href="#m5"/></svg></b><em class="da g"></em>
      <b class="n"><svg><use href="#m6"/></svg></b><em class="da g"></em>
      <b class="n"><svg><use href="#m7"/></svg></b>
      <b class="n"><svg><use href="#m8"/></svg></b>
    </div>
    <div class="tb bt3"><i class="grip g12"></i>
      <b class="i"><svg><use href="#a1"/></svg></b><b class="i"><svg><use href="#a2"/></svg></b><i class="sep"></i>
      <b class="i"><svg><use href="#a3"/></svg></b><b class="i"><svg><use href="#a4"/></svg></b><i class="sep"></i>
      <b class="i"><svg><use href="#a5"/></svg></b><b class="i"><svg><use href="#a6"/></svg></b><i class="sep"></i>
      <b class="i"><svg><use href="#a7"/></svg></b><b class="i"><svg><use href="#a8"/></svg></b><i class="sep"></i>
      <b class="i"><svg><use href="#f1"/></svg></b><b class="i"><svg><use href="#f2"/></svg></b><i class="sep"></i>
      <b class="i"><svg><use href="#u1"/></svg></b><b class="i"><svg><use href="#u1"/></svg></b><i class="sep"></i>
      <b class="i"><svg><use href="#r1"/></svg></b><b class="i"><svg><use href="#r1"/></svg></b>
    </div>
  </section>

  <section class="find">
    <div class="fside"><span class="fx">✕</span><span class="fmore">▸</span></div>
    <div class="fbody">
      <div class="fline"><label class="flabel">Find:</label><div class="finput"></div></div>
      <div class="fpanel">
        <div class="ftabs"><span>Category</span><span>Topic</span></div>
      </div>
    </div>
  </section>

  <footer class="status">
    <span class="sgrow">AF is saved.</span>
    <span class="s1c">AU : ON</span><span class="s2c">Color Publication</span><span class="s3c">1:[Book1]Sheet1!Col(AF 1)[1:9]</span><span class="s4c">1:[Graph1]1</span><span class="s5c">Radian</span>
  </footer>

  <div class="taskbar">
    <div class="tl">
      <svg class="orb" viewBox="0 0 36 36"><defs><radialGradient id="og" cx=".5" cy=".35" r=".7"><stop offset="0" stop-color="#9ad0ee"/><stop offset=".6" stop-color="#2878b0"/><stop offset="1" stop-color="#0d3a66"/></radialGradient></defs><circle cx="18" cy="18" r="17" fill="url(#og)" stroke="#9fc6dc"/><path d="M9 12c3-2 5-1 8 0l-1 6c-3-1-5-2-8 0z" fill="#e8502c"/><path d="M18 12c3 1 5 2 8 0l-1 6c-3 2-5 1-8 0z" fill="#80b840"/><path d="M8 19c3-2 5-1 8 0l-1 6c-3-1-5-2-8 0z" fill="#3a9ae0"/><path d="M17 19c3 1 5 2 8 0l-1 6c-3 2-5 1-8 0z" fill="#f4c020"/></svg>
      <svg class="tico t66" viewBox="0 0 30 30"><circle cx="15" cy="15" r="14" fill="#6d7880"/><circle cx="15" cy="16" r="7" fill="none" stroke="#d8dde0" stroke-width="1.500"/><path d="M8 14c3-4 11-4 14 0" fill="none" stroke="#d8dde0" stroke-width="1.500"/><path d="M15 7v3" stroke="#d8dde0" stroke-width="1.500"/></svg>
      <svg class="tico t38" viewBox="0 0 30 30"><path d="M7 3h20v23h-20z" fill="#7ab2d8" stroke="#4e7fa8"/><path d="M3 5h20v21h-20z" fill="#fff" stroke="#888"/><circle cx="13" cy="16" r="8" fill="#f08018"/><path d="M10 11l8 5-8 5z" fill="#fff"/></svg>
      <span class="tbtn w58"><svg class="tico" viewBox="0 0 36 36"><path d="M3 5h14v6h-14z" fill="#e8d67c" stroke="#a89648"/><path d="M17 8h16v6h-16z" fill="#f0df88" stroke="#a89648"/><path d="M3 11h30v20h-30z" fill="#f3e28f" stroke="#a89648"/><path d="M9 19h18v12h-18z" fill="#3f95bf"/><path d="M12 24h12v7h-12z" fill="#b8dcee"/></svg></span>
      <svg class="tico tS" viewBox="0 0 36 36"><circle cx="18" cy="18" r="17" fill="#f2f2fa"/><path d="M18 1a17 17 0 0 1 0 34c9-3 12-8 11-14-1-7-8-8-11-11-1-3 0-6 0-9z" fill="#281a86"/><path d="M18 35a17 17 0 0 1-17-17c1 7 8 8 12 11 2 2 3 4 5 6z" fill="#7868c8"/></svg>
      <span class="tbtn w51"><svg class="tico" viewBox="0 0 36 36"><text x="4" y="29" font-family="Liberation Sans" font-weight="700" font-size="34" fill="#39a4dc">e</text><path d="M3 33c-3-6 12-26 29-28 3 1 1 8-2 12" fill="none" stroke="#f0b820" stroke-width="2.500"/></svg></span>
      <span class="tbtn w54"><svg class="tico" viewBox="0 0 36 36"><path d="M3 4h30v29h-30z" fill="#cde3f2" stroke="#2b84b8" stroke-width="2"/><path d="M10 11h8M14 11c-3 4-4 8 0 12 4-2 6-5 3-8" fill="none" stroke="#145f96" stroke-width="3"/><path d="M24 26l5-14" stroke="#145f96" stroke-width="3"/></svg></span>
      <span class="tbtn w54 lit"><svg class="tico" viewBox="0 0 36 36"><path d="M10 3h24v24h-24zM10 9h24M10 15h24M10 21h24M18 3v24M26 3v24" fill="#fff" stroke="#c0c8d0"/><circle cx="15" cy="20" r="13" fill="#e87868"/><path d="M6 22l5-8 5 6 6-8M8 14h14M8 20h14M12 9v20M18 9v20" fill="none" stroke="#fbdcd4"/></svg></span>
      <span class="tbtn w59 act"><svg class="tico" viewBox="0 0 36 36"><path d="M6 12h15v20h-15z" fill="#fff" stroke="#555"/><path d="M9 17h9M9 20h9M9 23h9M9 26h9" stroke="#555"/><text x="15" y="25" font-family="Liberation Sans" font-weight="700" font-size="26" fill="#f7e640" stroke="#333" stroke-width="1">?</text></svg></span>
    </div>
    <div class="tray">
      <svg class="ti1" viewBox="0 0 18 18"><circle cx="8" cy="8" r="7" fill="#5fa86c"/><path d="M7 14l6-8 3 2-6 8-4 1z" fill="#f4e080" stroke="#555" stroke-width=".6"/></svg>
      <span class="trayA">A</span><span class="trayH">漢</span>
      <span class="trayq">?</span>
      <span class="traymini"><svg width="10" height="10" viewBox="0 0 10 10"><path d="M3 1h6v4h-6zM1 3h6v4h-6z" fill="none" stroke="#eef"/></svg><em></em></span>
      <span class="trayup"></span>
      <svg class="ti2" viewBox="0 0 18 18"><path d="M2 12l8-9c3-2 7 2 5 5l-9 8c-3 1-6-2-4-4z" fill="#eef5d8" stroke="#567"/><path d="M9 4l6 5-6 6-5-5z" fill="#9ac830"/></svg>
      <svg class="ti3" viewBox="0 0 18 18"><path d="M3 1v16" stroke="#fff" stroke-width="1.500"/><path d="M4 2h5l2 2h5l-3 4 3 3h-6l-2-2h-4z" fill="#eef2f8" stroke="#333" stroke-width=".5"/></svg>
      <svg class="ti4" viewBox="0 0 18 18"><path d="M1 2h8v9h-8z" fill="#3a4a58" stroke="#eef"/><path d="M6 7h11v8h-11z" fill="#3a4a58" stroke="#eef"/></svg>
      <svg class="ti5" viewBox="0 0 18 18"><path d="M2 6h3l4-4v14l-4-4h-3z" fill="#eef2f8" stroke="#456" stroke-width=".5"/><path d="M11 6c1 2 1 4 0 6M13 4c2 3 2 7 0 10" fill="none" stroke="#eef2f8"/></svg>
      <div class="clock"><span>오후 2:11</span><span>2014-07-09</span></div>
      <span class="showdesk"></span>
    </div>
  </div>
</div>
</body>
</html>
```
FILE: styles.css
```css
* { box-sizing: border-box; }
html, body { margin: 0; padding: 0; }
body { width: 1280px; height: 1024px; overflow: hidden; background: #f9f9f9; font: 12px "Liberation Sans", "Noto Sans CJK KR", sans-serif; color: #222; }
.defs { position: absolute; }
.app { width: 1280px; height: 1024px; display: flex; flex-direction: column; }

/* title */
.title { height: 21px; display: flex; align-items: center; padding-left: 2px; background: linear-gradient(#5f8298 0, #a5bfdc 2px, #b4cbe4 12px, #b6cce5 21px); }
.appicon { width: 17px; height: 17px; margin-right: 7px; }
.titletext { font-family: "Liberation Sans", "Noto Sans CJK KR", sans-serif; font-size: 12px; letter-spacing: .33px; color: #1c2a3a; white-space: nowrap; }
.caps { margin-left: auto; display: flex; gap: 3px; padding-right: 2px; }
.cap { width: 30px; height: 16px; border: 1px solid #5a7590; border-radius: 3px; background: linear-gradient(#c6d8ec, #9db7d3); display: flex; align-items: center; justify-content: center; }
.capx { background: linear-gradient(#e89a88, #d0452e 55%, #d86a50); border-color: #5a2820; }
.capmin { width: 11px; height: 4px; background: #eef; border: 1px solid #345; }

/* menu */
.menu { height: 21px; display: flex; align-items: center; gap: 13.400px; padding-left: 7px; background: linear-gradient(#fff 0, #fff 5px, #e3e7f7 7px, #e6eaf8 20px); border-bottom: 1px solid #a2a2a2; color: #222; }
.docicon { width: 16px; height: 16px; margin-right: -6.400px; }
.menu > span { margin-top: 1px; }
.mdicaps { margin-left: auto; display: flex; gap: 2px; padding-right: 1px; align-self: flex-end; }
.mcap { width: 17px; height: 17px; background: #eef0fb; border: 1px solid #b8c8d8; border-bottom: 0; display: flex; align-items: center; justify-content: center; }

/* toolbars */
.toolbars { height: 95px; background: #f9f9f9; border-bottom: 2px solid #6e6e6e; }
.row { height: 31px; display: flex; }
.tb { height: 31px; display: flex; align-items: center; padding-top: 2px; padding-right: 7px; border-right: 1px solid #c4c4c4; border-bottom: 1px solid #c4c4c4; border-radius: 0 0 3px 0; }
.tbp { padding-right: 11px; }
.tbr { padding-right: 5px; }
.tbf { padding-right: 3px; }
.grip { display: block; height: 27px; flex: none; background: linear-gradient(#aaa, #aaa) 6px 0/1px 100% no-repeat, linear-gradient(#aaa, #aaa) 9px 0/1px 100% no-repeat; }
.g13 { width: 13px; } .g12 { width: 12px; } .g11 { width: 11px; } .g17 { width: 17px; } .g6 { width: 6px; background: linear-gradient(#aaa, #aaa) 1px 0/1px 100% no-repeat, linear-gradient(#aaa, #aaa) 4px 0/1px 100% no-repeat; }
.i, .n { width: 23px; height: 24px; flex: none; display: flex; align-items: center; justify-content: center; font-weight: 400; }
.i svg, .n svg, .v svg { width: 18px; height: 18px; display: block; }
.w22 { width: 22px; }
.n { width: 22px; }
.i.on { outline: 1px solid #c0c0c0; outline-offset: -2px; background: #f4f1dc; }
.off svg { opacity: .75; }
.sep { display: block; width: 8px; height: 25px; flex: none; background: linear-gradient(#c8c8c8, #c8c8c8) center/1px 100% no-repeat; }
.t { font-family: "Liberation Serif", serif; font-weight: 700; font-size: 14px; color: #8e8e8e; }
.t sup, .t sub { font-size: 9px; line-height: 0; }
.it { font-style: italic; }
.ul { text-decoration: underline; }
.stack { font-size: 8px; line-height: 8px; display: inline-block; }
.combo { height: 25px; flex: none; display: flex; align-items: center; border: 1px solid #d2d2d2; border-radius: 2px; background: #fafafa; color: #999; }
.fontc { width: 98px; padding-left: 3px; gap: 4px; border-color: #bbb; }
.fontc .ic { width: 18px; height: 18px; }
.sizec { width: 49px; margin-left: 1px; padding-left: 3px; }
.linec { width: 60px; margin-left: 4px; padding-left: 4px; }
.numc { width: 39px; padding-left: 3px; }
.rectc { width: 60px; padding-left: 4px; }
.ctext { white-space: nowrap; }
.arr, .arrs, .da { font-style: normal; display: block; flex: none; width: 0; height: 0; }
.arr { margin-left: auto; margin-right: 4px; border: 4px solid transparent; border-top: 4px solid #999; border-bottom: 0; }
.arrs { width: 12px; height: 4px; clip-path: polygon(2px 0, 10px 0, 6px 4px); background: #999; }
.a14 { width: 14px; clip-path: polygon(3px 0, 11px 0, 7px 4px); }
.a15 { width: 16px; clip-path: polygon(4px 0, 12px 0, 8px 4px); }
.lsample { display: block; width: 33px; height: 1px; background: #111; }
.rsample { display: block; width: 33px; height: 14px; border: 1px solid #111; background: #fff; }

/* main */
.main { height: 654px; display: flex; }
.tools { width: 31px; flex: none; background: #f9f9f9; border-right: 2px solid #b4b4b4; }
.toolcol { height: 317px; padding-top: 10px; border-bottom: 1px solid #b4b4b4; width: 29px; display: flex; flex-direction: column; align-items: center; }
.v { height: 23px; flex: none; display: flex; align-items: center; justify-content: center; width: 22px; }
.v svg { width: 17px; height: 17px; }
.vt { font: 700 17px "Liberation Serif", serif; color: #222; }
.panel { width: 149px; flex: none; background: #fff; border-right: 2px solid #6e6e6e; display: flex; flex-direction: column; padding-left: 4px; padding-right: 10px; }
.phead { height: 14px; display: flex; align-items: center; background: #f9f9f9; margin: 0 -10px 0 -4px; padding: 0 12px 0 6px; gap: 3px; }
.pgrip { display: block; flex: 1; height: 4px; border-top: 1px solid #aaa; border-bottom: 1px solid #aaa; }
.pbtn { width: 11px; height: 11px; font-size: 8px; line-height: 11px; text-align: center; border: 1px solid #c8c8c8; color: #888; }
.px { color: #111; font-weight: 700; border-color: #ddd; }
.tree { height: 266px; padding-left: 3px; }
.node { height: 18px; display: flex; align-items: center; gap: 4px; color: #333; }
.node.sub { margin-left: 6px; gap: 4px; }
.ficon { width: 17px; height: 17px; flex: none; }
.conn { display: block; width: 11px; height: 16px; margin-top: -8px; margin-right: -3px; border-left: 1px dotted #666; border-bottom: 1px dotted #666; }
.split { height: 2px; background: #6e6e6e; flex: none; }
.lhead { height: 21px; display: flex; align-items: center; background: linear-gradient(#fff, #f4f4f4); border-bottom: 1px solid #ddd; padding-left: 6px; color: #333; flex: none; }
.c1 { width: 76px; }
.c1b { width: 60px; }
.c2 { width: 25px; flex: none; }
.c3 { width: 15px; flex: none; }
.c4 { width: 12px; flex: none; }
.lrow { height: 19px; display: flex; align-items: center; color: #333; flex: none; padding-left: 3px; gap: 2px; }
.lhead + .lrow { margin-top: 2px; }
.hscroll { margin-top: auto; height: 15px; display: flex; align-items: center; background: #f2f2f2; flex: none; padding-left: 6px; }
.thumb { display: block; width: 62px; height: 13px; margin-left: 6px; background: linear-gradient(#f6f6f6, #ccc); border: 1px solid #bbb; border-radius: 2px; font-style: normal; font-size: 8px; line-height: 11px; text-align: center; color: #666; }
.sl { display: block; border: 4px solid transparent; border-right: 4px solid #444; border-left: 0; }
.sr { display: block; margin-left: auto; margin-right: 6px; border: 4px solid transparent; border-left: 4px solid #444; border-right: 0; }
.mdi { width: 936px; flex: none; background: #fff; position: relative; }
.pageno { position: absolute; left: 0; top: 0; width: 20px; height: 20px; background: #c8c8c8; font: 700 13px/20px "Liberation Sans", sans-serif; text-align: center; color: #111; }
.chart { display: block; }
.mdigray { flex: 1; background: #c0c0c0; }

/* chart */
.frame rect { fill: none; stroke: #000; stroke-width: 2; }
.frame path { fill: none; stroke: #000; stroke-width: 2; }
.frame .minor { stroke-width: 1.500; }
.ticks text, .ticksx text, .axt, .ltext text { font-family: "Liberation Serif", serif; font-weight: 700; fill: #111; }
.ticks text { font-size: 22px; text-anchor: end; }
.ticksx text { font-size: 22px; text-anchor: middle; }
.axt { font-size: 29px; }
.axx { letter-spacing: .25px; }
.axy { letter-spacing: .35px; }
.cel { font-family: "Noto Sans CJK KR", sans-serif; font-weight: 400; font-size: 23px; }
.s1, .s2, .s3, .s4 { fill: none; stroke-width: 1.200; }
.s1 { stroke: #000; } .s2 { stroke: #e00000; } .s3 { stroke: #0000c0; } .s4 { stroke: #087878; }
.mk1 { fill: #000; } .mk2 { fill: #e01010; } .mk3 { fill: #0808d8; } .mk4 { fill: #068078; }
.lbox { fill: #fff; stroke: #000; stroke-width: 1.200; }
.lsel { fill: none; stroke: #e01020; stroke-width: 1.200; }
.lk { stroke: #000; } .lr { stroke: #e00000; } .lb { stroke: #0000c0; } .lt { stroke: #087878; }
.ltext text { font-size: 23px; }

/* bottom toolbar */
.bottombar { height: 35px; display: flex; background: #f9f9f9; border-bottom: 2px solid #fff; padding-top: 1px; }
.bottombar .tb { height: 31px; }
.bt1 { width: 338px; padding-right: 0; }
.bt2 { margin-left: 92px; width: 283px; padding-right: 0; }
.bt3 { padding-right: 6px; }
.da { width: 15.500px; height: 5px; background: #111; clip-path: polygon(4px 0, 12px 0, 8px 5px); }
.da.g { background: #999; }
.bt2 .n { width: 21px; }
.bt2 .sep { width: 6px; }

/* find */
.find { height: 139px; display: flex; background: #f9f9f9; border-top: 2px solid #777; padding-right: 2px; border-bottom: 3px solid #aaa; }
.fside { width: 18px; flex: none; display: flex; flex-direction: column; align-items: flex-start; padding: 7px 0 0 5px; gap: 2px; }
.fx { width: 11px; height: 11px; font-size: 9px; line-height: 11px; font-weight: 700; text-align: center; color: #111; }
.fmore { width: 11px; height: 11px; font-size: 8px; line-height: 11px; text-align: center; color: #999; border: 1px solid #d0d0d0; }
.fbody { flex: 1; display: flex; flex-direction: column; }
.fline { height: 24px; display: flex; align-items: center; }
.flabel { font: 700 12.500px "DejaVu Sans", sans-serif; width: 34px; flex: none; color: #222; letter-spacing: -.5px; }
.finput { flex: 1; height: 17px; background: #fff; border: 1px solid #707070; border-radius: 1px; }
.fpanel { height: 105px; background: #fff; border: 1px solid #555; border-radius: 1px; }
.ftabs { height: 23px; background: #f9f9f9; border-bottom: 1px solid #dcdcdc; display: flex; align-items: center; padding-left: 6px; gap: 12px; color: #333; font-size: 11px; }
.ftabs span:last-child { height: 100%; display: flex; align-items: center; padding-right: 6px; border-right: 1px solid #e4e4e4; }

/* status */
.status { height: 20px; display: flex; align-items: center; padding-left: 2px; background: #fdf9f7; color: #222; white-space: nowrap; }
.sgrow { flex: 1; }
.status span + span { display: block; }
.s1c { width: 58px; }
.s2c { width: 118px; border-left: 1px solid #eee; }
.s3c { width: 203px; }
.s4c { width: 83px; }
.s5c { width: 50px; }

/* taskbar */
.taskbar { height: 39px; display: flex; align-items: center; justify-content: space-between; background: linear-gradient(90deg, #62859f 0, #7490aa 110px, #a8c3e1 170px, #a8c3e1 920px, #7b96ae 960px, #7f9ab4 1100px, #8da6bd 1280px); border-top: 1px solid #dfe8f2; }
.tl { display: flex; align-items: center; height: 100%; }
.orb { width: 36px; height: 36px; margin-left: 9px; flex: none; }
.tico { width: 32px; height: 32px; display: block; flex: none; }
.t66 { width: 27px; height: 27px; margin-left: 21px; }
.t38 { width: 28px; height: 28px; margin-left: 41px; margin-right: 20px; }
.tS { width: 34px; height: 34px; margin-left: 15px; margin-right: 16px; }
.tbtn { height: 100%; display: flex; align-items: center; justify-content: center; border: 1px solid #8ea7bd; border-radius: 3px; background: linear-gradient(#cadcee, #a7c0dc); flex: none; }
.w58 { width: 58px; }
.w51 { width: 51px; margin-right: 11px; }
.w54 { width: 54px; margin-right: 8px; }
.w59 { width: 59px; }
.lit { background: linear-gradient(#f2f6fb, #d4e1ef); }
.act { background: linear-gradient(#f9e89a 0, #f8c840 45%, #f09828 100%); border-color: #a8753a; }
.tray { display: flex; align-items: center; height: 100%; }
.ti1 { width: 18px; height: 18px; margin-right: 6px; }
.trayA { font: 700 16px "Liberation Sans", sans-serif; color: #eef4fb; width: 16px; }
.trayH { font: 15px "Noto Sans CJK TC", sans-serif; color: #dfe8f4; margin-left: 3px; }
.trayq { width: 14px; height: 14px; border-radius: 50%; background: #1a3c9c; color: #fff; font: 700 10px/14px "Liberation Sans", sans-serif; text-align: center; margin-left: 8px; }
.traymini { width: 10px; margin-left: 10px; display: flex; flex-direction: column; gap: 3px; }
.traymini em { display: block; border: 3px solid transparent; border-top: 3px solid #dfe8f4; border-bottom: 0; height: 0; box-sizing: content-box; width: 0; }
.trayup { display: block; width: 0; height: 0; border: 4px solid transparent; border-bottom: 4px solid #eef4fb; border-top: 0; margin-left: 11px; }
.ti2 { width: 18px; height: 18px; margin-left: 11px; }
.ti3 { width: 17px; height: 17px; margin-left: 6px; }
.ti4 { width: 18px; height: 18px; margin-left: 8px; }
.ti5 { width: 17px; height: 17px; margin-left: 7px; }
.clock { width: 96px; margin-left: 1px; display: flex; flex-direction: column; align-items: center; color: #e8eff7; font-size: 12px; line-height: 17px; font-family: "Liberation Sans", "Noto Sans CJK KR", sans-serif; }
.showdesk { width: 11px; height: 100%; background: linear-gradient(90deg, #6a7f90, #87a0b4); border-left: 1px solid #b8c8d6; }
```
